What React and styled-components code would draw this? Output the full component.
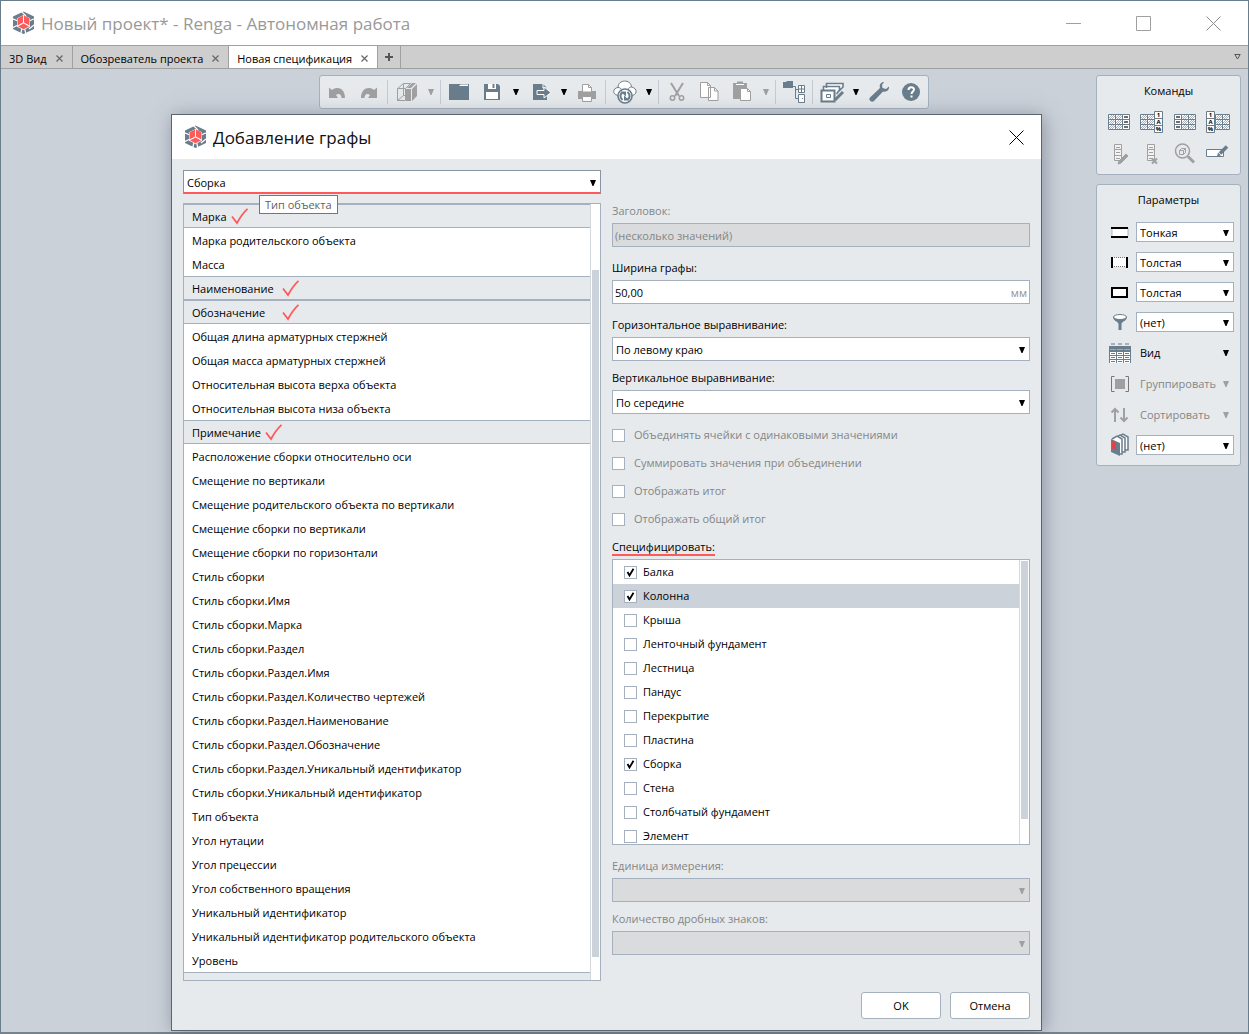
import * as React from 'react';
import { useState } from 'react';
import styled, { createGlobalStyle, css } from 'styled-components';

const SLATE = '#697d8c';
const DIM = '#a0a0a0';
const LINE = '#a5b1be';
const RED = '#ff5a5a';

const GlobalStyle = createGlobalStyle`
  * {
    box-sizing: border-box;
  }
  body {
    margin: 0;
    color: #000;
    font: 11px/16px 'Open Sans', 'Noto Sans', sans-serif;
  }
  button, input, select {
    font: inherit;
    color: inherit;
    border-radius: 0;
  }
  svg {
    display: block;
    flex: none;
  }
`;

const Window = styled.div`
  position: relative;
  min-height: 100vh;
  display: flex;
  flex-direction: column;
  border: 1px solid ${SLATE};
  border-bottom: 2px solid #76828c;
  background: #cbd1d9;
`;

const TitleBar = styled.header`
  display: flex;
  align-items: center;
  height: 44px;
  padding-left: 11px;
  background: #fff;
`;

const Title = styled.h1`
  flex: 1;
  margin: 0 0 0 5px;
  padding-top: 2px;
  font-size: 17px;
  line-height: 24px;
  font-weight: 400;
  color: ${(props) => (props.$dim ? '#999' : '#111')};
`;

const PlainButton = styled.button`
  display: flex;
  align-items: center;
  justify-content: center;
  padding: 0;
  border: 0;
  background: none;
`;

const WindowButton = styled(PlainButton)`
  width: 70px;
  height: 44px;
`;

const TabBar = styled.nav`
  display: flex;
  height: 24px;
  background: #cecece;
  border-top: 1px solid ${DIM};
  border-bottom: 1px solid ${DIM};
`;

const Tab = styled.div`
  display: flex;
  align-items: center;
  gap: 9px;
  padding: 3px 9px 0 8px;
  border-right: 1px solid ${DIM};
  ${(props) =>
    props.$active &&
    css`
      background: #fff;
    `}
`;

const TabLabel = styled(PlainButton)`
  white-space: nowrap;
`;

const AddTab = styled(PlainButton)`
  width: 23px;
  border-right: 1px solid ${DIM};
`;

const TabMenu = styled(PlainButton)`
  width: 22px;
  margin-left: auto;
`;

const Workspace = styled.main`
  display: grid;
  grid-template-columns: 1fr auto 1fr;
  align-items: start;
  padding: 6px 7px 6px 5px;
`;

const Toolbar = styled.div`
  grid-column: 2;
  display: flex;
  align-items: center;
  height: 34px;
  padding: 0 1px;
  border: 1px solid ${LINE};
  border-radius: 3px;
  background: #e6eaed;
`;

const ToolButton = styled(PlainButton)`
  width: ${(props) => (props.$split ? 34 : 32)}px;
  height: 32px;
`;

const MenuButton = styled(PlainButton)`
  width: 14px;
  height: 32px;
`;

const Separator = styled.span`
  width: 1px;
  height: 24px;
  margin: 0 2px;
  background: #c4cbd2;
`;

const Side = styled.aside`
  justify-self: end;
  width: 145px;
  display: flex;
  flex-direction: column;
  gap: 9px;
`;

const Panel = styled.section`
  padding: 5px;
  border: 1px solid ${LINE};
  border-radius: 3px;
  background: #e6eaed;
`;

const PanelTitle = styled.h2`
  margin: 0 0 6px;
  font-size: 11px;
  line-height: 20px;
  font-weight: 400;
  text-align: center;
`;

const Commands = styled.div`
  display: grid;
  grid-template-columns: repeat(4, 33px);
  grid-auto-rows: 31px;
`;

const Params = styled.div`
  padding: 1px 1px 0 2px;
`;

const ParamRow = styled.div`
  display: grid;
  grid-template-columns: 32px 1fr;
  align-items: center;
  justify-items: center;
  height: ${(props) => (props.$tall ? 31 : 30)}px;
`;

const ParamButton = styled(PlainButton)`
  width: 100%;
  justify-content: space-between;
  padding: 0 5px 0 4px;
  color: ${(props) => (props.disabled ? '#858585' : '#000')};
`;

const SelectBox = styled.span`
  display: grid;
  align-items: center;
  width: 100%;
  > * {
    grid-area: 1 / 1;
  }
  > svg {
    justify-self: end;
    margin: 1px 5px 0 0;
    pointer-events: none;
  }
`;

const NativeSelect = styled.select`
  appearance: none;
  width: 100%;
  height: ${(props) => props.$height}px;
  padding: 1px 14px 0 3px;
  border: 1px solid ${LINE};
  background: #fff;
  outline: none;
  &:disabled {
    background: #dadbdd;
    opacity: 1;
  }
  ${(props) =>
    props.$marked &&
    css`
      padding-top: 2px;
      border-color: #8794a2;
      border-bottom: 2px solid ${RED};
    `}
`;

/* the dialog floats over the workspace */
const Dialog = styled.div`
  position: absolute;
  top: 113px;
  left: 170px;
  right: 206px;
  border: 1px solid #5b656d;
  background: #e6eaed;
  box-shadow: 2px 2px 18px rgba(80, 85, 105, 0.5);
`;

const DialogHeader = styled(TitleBar)`
  padding-left: 12px;
`;

const CloseButton = styled(PlainButton)`
  width: 50px;
  height: 44px;
`;

const DialogBody = styled.form`
  display: grid;
  grid-template-columns: 1fr 1fr;
  column-gap: 11px;
  padding: 11px;
`;

const TypeField = styled.div`
  position: relative;
  height: 33px;
`;

const Tooltip = styled.span`
  position: absolute;
  top: 25px;
  left: 76px;
  height: 19px;
  padding: 1px 5px;
  border: 1px solid #767676;
  background: #fff;
  color: #5f5f5f;
  white-space: nowrap;
`;

const ListFrame = styled.div`
  display: flex;
  height: ${(props) => props.$height}px;
  border: 1px solid ${LINE};
  background: #fff;
`;

const List = styled.ul`
  flex: 1;
  margin: 0;
  padding: 0;
  list-style: none;
  overflow: hidden;
`;

const ScrollTrack = styled.div`
  width: 10px;
  padding: 1px;
  border-left: 1px solid #d3d8dd;
`;

const ScrollThumb = styled.div`
  width: 7px;
  height: ${(props) => props.$size}px;
  margin-top: ${(props) => props.$start}px;
  background: #cbd2d9;
`;

const Item = styled.li`
  display: flex;
  align-items: center;
  gap: ${(props) => props.$gap || 4}px;
  height: 24px;
  padding: 1px 0 0 8px;
  border: 0 solid ${LINE};
  ${(props) =>
    props.$used &&
    css`
      border-width: 1px 0;
      background: #e6eaed;
    `}
`;

const CheckItem = styled.li`
  display: flex;
  align-items: center;
  height: 24px;
  padding-left: 11px;
  background: ${(props) => (props.$selected ? '#cbd2d9' : 'none')};
`;

const Properties = styled.div`
  min-width: 0;
`;

const Fields = styled.div`
  min-width: 0;
  margin-top: 33px;
`;

const Field = styled.div`
  display: grid;
  gap: 4px;
  margin-bottom: ${(props) => (props.$tight ? 9 : 13)}px;
  color: ${(props) => (props.$disabled ? '#858585' : '#000')};
`;

const Marked = styled.span`
  display: block;
  width: fit-content;
  height: 17px;
  margin-bottom: 3px;
  border-bottom: 2px solid ${RED};
`;

const TextBox = styled.div`
  display: flex;
  align-items: center;
  height: 24px;
  padding: 1px 2px 0;
  border: 1px solid ${LINE};
  background: ${(props) => (props.$disabled ? '#dadbdd' : '#fff')};
`;

const TextInput = styled.input`
  flex: 1;
  min-width: 0;
  padding: 0;
  border: 0;
  background: none;
  outline: none;
  &:disabled {
    color: #858585;
  }
`;

const Unit = styled.span`
  color: #8f8f8f;
`;

const CheckLabel = styled.label`
  display: flex;
  align-items: center;
  gap: ${(props) => (props.$wide ? 9 : 6)}px;
  height: 16px;
  color: ${(props) => (props.$wide ? '#858585' : '#000')};
`;

const CheckStack = styled.div`
  display: grid;
  gap: 12px;
  margin-bottom: 12px;
`;

const Box = styled.span`
  display: grid;
  place-items: center;
  > * {
    grid-area: 1 / 1;
  }
  input {
    appearance: none;
    width: 13px;
    height: 13px;
    margin: 0;
    border: 1px solid ${LINE};
    background: #fff;
  }
  svg {
    pointer-events: none;
  }
  input:not(:checked) + svg {
    display: none;
  }
`;

const Footer = styled.div`
  grid-column: 1 / -1;
  display: flex;
  justify-content: flex-end;
  gap: 9px;
  margin-top: 11px;
`;

const PushButton = styled.button`
  width: 80px;
  height: 27px;
  padding: 0;
  border: 1px solid ${LINE};
  border-radius: 3px;
  background: #fff;
`;

function Icon({ size = 24, children }) {
  return (
    <svg width={size} height={size} viewBox={`0 0 ${size} ${size}`} fill="none" aria-hidden="true">
      {children}
    </svg>
  );
}

function Arrow({ dim }) {
  return (
    <svg width="6" height="6" viewBox="0 0 6 6" aria-hidden="true">
      <path d="M0 0h6L3.5 6h-1z" fill={dim ? DIM : '#000'} />
    </svg>
  );
}

function Cross({ size, color, width = 1 }) {
  return (
    <svg width={size} height={size} viewBox={`0 0 ${size} ${size}`} aria-hidden="true">
      <path d={`M.5 .5L${size - 0.5} ${size - 0.5}M${size - 0.5} .5L.5 ${size - 0.5}`} stroke={color} strokeWidth={width} />
    </svg>
  );
}

function Logo() {
  return (
    <Icon>
      <path d="M11.500 .5l10.500 5v12.500l-10.500 5-10.500-5V5.500z" fill={SLATE} />
      <path d="M11.500 4l6.500 3.300v8.400l-6.500 3.300L5 15.700V7.300z" fill="#fff" />
      <path d="M0 7.500l6 2.500M23 7.500L17 10M9 0l5 5M5 14.500l-5 2.500M17 18l5-4M8.500 23.500l1.500-6M14 23.500L12.500 17" stroke="#fff" strokeWidth="1.200" />
      <path d="M11 4.500v7L5.500 14.500V7.200zM12 4.500v7l5.500 3V7.200zM11.500 12.500l5.500 3-5.500 2.800L6 15.500z" fill={RED} />
    </Icon>
  );
}

function Tick() {
  return (
    <svg width="17" height="17" viewBox="0 0 17 17" fill="none" aria-hidden="true">
      <path d="M1 8.500l5 6.500C9 9.500 12 5 16.500 .8" stroke={RED} strokeWidth="1.800" />
    </svg>
  );
}

const icons = {
  undo: <path d="M4 7.500l3 2.500c5-4 13-2 13 8h-3.500c0-4-3-5-5.500-3l2 3H4z" fill={DIM} />,
  redo: <path d="M20 7.500L17 10C12 6 4 8 4 18h3.500c0-4 3-5 5.500-3l-2 3h9z" fill={DIM} />,
  cube: (
    <>
      <path d="M2.500 8.500h8v12h-8zM2.500 8.500l6-5h7l-5 5M8.500 3.500v12l-6 5M8.500 15.500h2" stroke={DIM} />
      <path d="M12 8l5-5h4l-5 5zM11 9h5v12h-5zM17 9l5-5v12l-5 5z" fill={DIM} />
    </>
  ),
  folder: (
    <>
      <path d="M2 4h20v16H2z" fill={SLATE} />
      <path d="M13.500 4.500H21V6h-9z" fill="#fff" />
    </>
  ),
  save: (
    <>
      <path d="M4 4h14l2 2v14H4z" fill={SLATE} />
      <path d="M8 4h8v5H8zM6 12h12v7H6z" fill="#fff" />
      <path d="M12.500 4h2v4h-2z" fill={SLATE} />
    </>
  ),
  exportFile: (
    <>
      <path d="M5 4h10l4 4v12H5z" fill={SLATE} />
      <path d="M15 4v4h4" stroke="#fff" />
      <path d="M9 10.500h7V7l7 5.500-7 5.500v-3.500H9z" fill={SLATE} stroke="#fff" />
    </>
  ),
  print: (
    <>
      <path d="M3 11h18v8H3z" fill={DIM} />
      <path d="M7.500 12V4.500h6l3 3V12zM7.500 16.500h9v5h-9z" fill="#fff" stroke={DIM} />
      <path d="M13.500 4.500v3h3" stroke={DIM} />
    </>
  ),
  sync: (
    <>
      <path d="M7 15.500C-1 16-1 8 5 7.500 5-1 18-1 18.500 7c6.500 1 6 9-1 8.500z" fill="#fff" stroke={SLATE} />
      <path d="M5 7.500c2 0 3 1 3 2M18.500 7c-2 0-3 1-3 2.500" stroke={SLATE} />
      <circle cx="12" cy="16" r="7" fill="#fff" stroke={SLATE} strokeWidth="1.600" />
      <path d="M9.500 20c-3.500-3-2-6.500 0-7.500M14.500 12c3.500 3 2 6.500 0 7.500" stroke={SLATE} strokeWidth="2" />
      <path d="M7.500 11.500H13v5zM16.500 20.500H11v-5z" fill={SLATE} />
    </>
  ),
  cut: (
    <>
      <path d="M6 3l8 13M18 3l-8 13" stroke={DIM} strokeWidth="2" />
      <circle cx="7.500" cy="18" r="2.200" stroke={DIM} strokeWidth="1.500" />
      <circle cx="16.500" cy="18" r="2.200" stroke={DIM} strokeWidth="1.500" />
    </>
  ),
  copy: (
    <>
      <path d="M3.500 2.500h7l3 3v12h-10zM11.500 7.500h6l3.500 3.500v9.500h-9.500z" fill="#fff" stroke={DIM} />
      <path d="M10.500 2.500v3h3M17.500 7.500V11h3.500" stroke={DIM} />
    </>
  ),
  paste: (
    <>
      <path d="M3 3h4V1.500h6V3h4v16H3z" fill={DIM} />
      <path d="M6 4.500h8" stroke="#fff" />
      <path d="M10.500 8.500h7l3 3v9h-10z" fill="#fff" stroke={DIM} />
      <path d="M17.500 8.500v3h3" stroke={DIM} />
    </>
  ),
  tree: (
    <>
      <path d="M1 2h3l1-1h6v7H1z" fill={SLATE} />
      <path d="M11 6.500h2.500v12H16M13.500 9.500H16" stroke={SLATE} />
      <path d="M16.500 5.500h6v7h-6zM19.500 5.500v7M16.500 9h6M16.500 14.500h6v8h-6zM20 18.500h1" fill="#fff" stroke={SLATE} />
    </>
  ),
  boxes: (
    <>
      <path d="M6.500 8V3.500H23V7l-6 6M3.500 11V6.500h16V10l-3 4" fill="#fff" stroke={SLATE} strokeWidth="1.600" />
      <path d="M1.500 10.500h13v11h-13z" fill="#fff" stroke={SLATE} strokeWidth="2" />
      <path d="M15 20l8-8" stroke={SLATE} strokeWidth="3" />
      <path d="M6.500 14.500h4v3h-4z" stroke={SLATE} />
    </>
  ),
  wrench: (
    <path d="M17 2c-3 0-5 2.500-4 6L3 17.500c-2 2.500 1.500 5.500 4 3.500L16 11.500c3.500 1 6.500-1.500 6-5L19 9l-3.500-1-.5-3z" fill={SLATE} />
  ),
  help: (
    <>
      <circle cx="12" cy="12" r="9" fill={SLATE} />
      <path d="M9.500 10c0-3.500 5.500-3.500 5.500-.5 0 2-2.500 2-2.500 4.500M12.500 15.500v2" stroke="#fff" strokeWidth="2" />
    </>
  ),
};

function TableGlyph({ x, cols }) {
  const cells = [];
  for (let c = 0; c < cols; c++) {
    for (let r = 0; r < 3; r++) {
      const left = x + c * 7;
      const top = 4 + r * 5;
      cells.push(
        <g key={`${c}-${r}`}>
          <path d={`M${left + 0.5} ${top + 0.5}h7v5h-7z`} stroke={SLATE} fill="#fff" />
          <path d={`M${left + 1} ${top + 4}l3-3M${left + 2} ${top + 5}l4-4M${left + 4} ${top + 5}l3-3`} stroke={LINE} />
        </g>
      );
    }
  }
  return cells;
}

function DashColumn({ x }) {
  return (
    <>
      <path d={`M${x + 0.5} 4.500h7v15h-7zM${x} 9.500h8M${x} 14.500h8`} fill="#fff" stroke={SLATE} />
      <path d={`M${x + 2} 7h4M${x + 2} 12h4M${x + 2} 17h4`} stroke="#6e6e6e" strokeWidth="2" />
    </>
  );
}

function FormatColumn({ x }) {
  return (
    <>
      <path d={`M${x + 0.5} 1.500h8v21h-8zM${x} 8.500h9M${x} 15.500h9`} fill="#fff" stroke={SLATE} />
      <g fill="#000" fontSize="6" fontWeight="700" textAnchor="middle">
        <text x={x + 4.5} y="7">1</text>
        <text x={x + 4.5} y="14">A</text>
        <text x={x + 4.5} y="21">%</text>
      </g>
    </>
  );
}

const recordGlyph = (
  <path d="M8.500 3.500h7v16h-7zM8 8.500h8M8 14.500h8M10 6.500h4M10 11.500h4M10 17.500h4" fill="#f2f2f2" stroke={DIM} />
);

const commands = [
  { label: 'Добавить графу справа', icon: <><TableGlyph x={2} cols={2} /><DashColumn x={16} /></> },
  { label: 'Добавить формулу справа', icon: <><TableGlyph x={1} cols={2} /><FormatColumn x={15} /></> },
  { label: 'Добавить графу слева', icon: <><TableGlyph x={9} cols={2} /><DashColumn x={2} /></> },
  { label: 'Добавить формулу слева', icon: <><TableGlyph x={10} cols={2} /><FormatColumn x={1} /></> },
  {
    label: 'Изменить графу',
    disabled: true,
    icon: <>{recordGlyph}<path d="M13 20l7-7 2 2-7 7-3 1z" fill={DIM} stroke={DIM} /></>,
  },
  {
    label: 'Удалить графу',
    disabled: true,
    icon: <>{recordGlyph}<path d="M13 17.500l5 5M18 17.500l-5 5" stroke={DIM} strokeWidth="2" /></>,
  },
  {
    label: 'Найти объект',
    disabled: true,
    icon: (
      <>
        <circle cx="10.500" cy="10" r="7" stroke={DIM} strokeWidth="1.500" />
        <path d="M7.500 9.500h4v4h-4zM7.500 9.500l2-2h4v4l-2 2M11.500 9.500l2-2" stroke={DIM} />
        <path d="M16 15.500l6 6" stroke={DIM} strokeWidth="3" />
      </>
    ),
  },
  {
    label: 'Переименовать',
    icon: (
      <>
        <path d="M1.500 8.500h17v7h-17z" fill="#fff" stroke={SLATE} />
        <path d="M15 12.500L22 5.500" stroke={SLATE} strokeWidth="3.500" />
        <path d="M12 15.500l1-4 3 3z" fill={SLATE} />
      </>
    ),
  },
];

const params = [
  {
    label: 'Горизонтальные линии',
    value: 'Тонкая',
    icon: <><path d="M4 7.500v9h16v-9" fill="#fff" stroke="#777" strokeDasharray="1 1" /><path d="M3 8h17M3 17h17" stroke="#000" strokeWidth="2" /></>,
  },
  {
    label: 'Вертикальные линии',
    value: 'Толстая',
    icon: <><path d="M4 7.500h15v9H4z" fill="#fff" stroke="#777" strokeDasharray="1 1" /><path d="M4 7v11M19 7v11" stroke="#000" strokeWidth="2" /></>,
  },
  { label: 'Рамка', value: 'Толстая', icon: <path d="M4 8h15v9H4z" fill="#fff" stroke="#000" strokeWidth="2" /> },
  {
    label: 'Фильтр',
    value: '(нет)',
    icon: <><path d="M5 7c0 4 5 4 5.500 7v6h3v-6C14 11 19 11 19 7z" fill={SLATE} /><ellipse cx="12" cy="7" rx="6.500" ry="2.500" fill="#fff" stroke={SLATE} /></>,
  },
  {
    label: 'Вид',
    menu: true,
    icon: (
      <>
        <path d="M3 3h4M10 3h4M17 3h4" stroke={LINE} strokeWidth="2" />
        <path d="M1 5h22v17H1z" fill={SLATE} />
        <path d="M2 8.500h6M9 8.500h6M16 8.500h6" stroke="#9caab5" />
        <path d="M2 12.500h6M9 12.500h6M16 12.500h6M2 16.500h6M9 16.500h6M16 16.500h6M2 20.500h6M9 20.500h6M16 20.500h6" stroke="#fff" strokeWidth="3" />
        <path d="M3 12.500h4M10 12.500h4M17 12.500h4M3 16.500h4M10 16.500h4M17 16.500h4M3 20.500h4M10 20.500h4M17 20.500h4" stroke={SLATE} />
      </>
    ),
  },
  {
    label: 'Группировать',
    menu: true,
    disabled: true,
    icon: <><path d="M6.500 4.500h-3v15h3M17.500 4.500h3v15h-3" stroke="#777" /><path d="M7 7h10v10H7z" fill={DIM} /></>,
  },
  {
    label: 'Сортировать',
    menu: true,
    disabled: true,
    icon: <path d="M7 19V6M3.500 9.500L7 6l3.500 3.500M16 5v13M12.500 14.500L16 18l3.500-3.500" stroke={DIM} strokeWidth="2" />,
  },
  {
    label: 'Раздел',
    value: '(нет)',
    icon: (
      <>
        <path d="M10 4l5-3 5 3v13h-3" fill="#fff" stroke={SLATE} strokeWidth="1.500" />
        <path d="M7 5l5-3 5 3v14h-3" fill="#fff" stroke={SLATE} strokeWidth="1.500" />
        <path d="M4 6l5-3 5 3v15h-3" fill="#fff" stroke={SLATE} strokeWidth="1.500" />
        <path d="M3 6l9 4v13l-9-4z" fill={SLATE} />
        <path d="M4 7.500L8 9v8l-4-1.500z" fill="#e04444" />
      </>
    ),
  },
];

const tabs = ['3D Вид', 'Обозреватель проекта', 'Новая спецификация'];

// used: the column is already in the specification, gap: space before its mark
const properties = [
  { name: 'Марка', used: true },
  { name: 'Марка родительского объекта' },
  { name: 'Масса' },
  { name: 'Наименование', used: true, gap: 8 },
  { name: 'Обозначение', used: true, gap: 17 },
  { name: 'Общая длина арматурных стержней' },
  { name: 'Общая масса арматурных стержней' },
  { name: 'Относительная высота верха объекта' },
  { name: 'Относительная высота низа объекта' },
  { name: 'Примечание', used: true },
  { name: 'Расположение сборки относительно оси' },
  { name: 'Смещение по вертикали' },
  { name: 'Смещение родительского объекта по вертикали' },
  { name: 'Смещение сборки по вертикали' },
  { name: 'Смещение сборки по горизонтали' },
  { name: 'Стиль сборки' },
  { name: 'Стиль сборки.Имя' },
  { name: 'Стиль сборки.Марка' },
  { name: 'Стиль сборки.Раздел' },
  { name: 'Стиль сборки.Раздел.Имя' },
  { name: 'Стиль сборки.Раздел.Количество чертежей' },
  { name: 'Стиль сборки.Раздел.Наименование' },
  { name: 'Стиль сборки.Раздел.Обозначение' },
  { name: 'Стиль сборки.Раздел.Уникальный идентификатор' },
  { name: 'Стиль сборки.Уникальный идентификатор' },
  { name: 'Тип объекта' },
  { name: 'Угол нутации' },
  { name: 'Угол прецессии' },
  { name: 'Угол собственного вращения' },
  { name: 'Уникальный идентификатор' },
  { name: 'Уникальный идентификатор родительского объекта' },
  { name: 'Уровень' },
];

const objects = [
  'Балка', 'Колонна', 'Крыша', 'Ленточный фундамент', 'Лестница', 'Пандус',
  'Перекрытие', 'Пластина', 'Сборка', 'Стена', 'Столбчатый фундамент', 'Элемент',
];

const options = [
  'Объединять ячейки с одинаковыми значениями',
  'Суммировать значения при объединении',
  'Отображать итог',
  'Отображать общий итог',
];

function Tool({ icon, label, menu, disabled }) {
  return (
    <>
      <ToolButton aria-label={label} $split={menu} disabled={disabled}>
        <Icon>{icons[icon]}</Icon>
      </ToolButton>
      {menu && (
        <MenuButton aria-label={label + ': меню'} disabled={disabled}>
          <Arrow dim={disabled} />
        </MenuButton>
      )}
    </>
  );
}

function Select({ value, height = 24, disabled, marked, ...rest }) {
  return (
    <SelectBox>
      <NativeSelect $height={height} $marked={marked} disabled={disabled} {...rest}>
        <option>{value}</option>
      </NativeSelect>
      <Arrow dim={disabled} />
    </SelectBox>
  );
}

function Check({ label, wide, ...rest }) {
  return (
    <CheckLabel $wide={wide}>
      <Box>
        <input type="checkbox" {...rest} />
        <svg width="9" height="9" viewBox="0 0 9 9" fill="none" aria-hidden="true">
          <path d="M1.500 4l2 3.500L7.500 .8" stroke="#000" strokeWidth="1.800" />
        </svg>
      </Box>
      {label}
    </CheckLabel>
  );
}

function AddColumnDialog() {
  const [checked, setChecked] = useState(['Балка', 'Колонна', 'Сборка']);
  const [width, setWidth] = useState('50,00');

  function toggle(name) {
    setChecked(checked.includes(name) ? checked.filter((n) => n !== name) : [...checked, name]);
  }

  return (
    <Dialog role="dialog" aria-labelledby="dialog-title">
      <DialogHeader>
        <Logo />
        <Title as="h2" id="dialog-title">Добавление графы</Title>
        <CloseButton aria-label="Закрыть">
          <Cross size={15} color="#000" />
        </CloseButton>
      </DialogHeader>
      <DialogBody onSubmit={(e) => e.preventDefault()}>
        <Properties>
          <TypeField>
            <Select aria-label="Тип объекта" value="Сборка" marked />
            <Tooltip>Тип объекта</Tooltip>
          </TypeField>
          <ListFrame $height={778}>
            <List>
              {properties.map((p) => (
                <Item key={p.name} $used={p.used} $gap={p.gap}>
                  {p.name}
                  {p.used && <Tick />}
                </Item>
              ))}
              <Item $used />
            </List>
            <ScrollTrack>
              <ScrollThumb $start={65} $size={687} />
            </ScrollTrack>
          </ListFrame>
        </Properties>
        <Fields>
          <Field $disabled>
            <label htmlFor="caption">Заголовок:</label>
            <TextBox $disabled>
              <TextInput id="caption" defaultValue="(несколько значений)" disabled />
            </TextBox>
          </Field>
          <Field>
            <label htmlFor="width">Ширина графы:</label>
            <TextBox>
              <TextInput id="width" value={width} onChange={(e) => setWidth(e.target.value)} />
              <Unit>мм</Unit>
            </TextBox>
          </Field>
          <Field $tight>
            <label htmlFor="halign">Горизонтальное выравнивание:</label>
            <Select id="halign" value="По левому краю" />
          </Field>
          <Field>
            <label htmlFor="valign">Вертикальное выравнивание:</label>
            <Select id="valign" value="По середине" />
          </Field>
          <CheckStack>
            {options.map((o) => (
              <Check key={o} label={o} wide disabled />
            ))}
          </CheckStack>
          <Field>
            <div>
              <Marked>Специфицировать:</Marked>
              <ListFrame $height={286}>
                <List>
                  {objects.map((name) => (
                    <CheckItem key={name} $selected={name === 'Колонна'}>
                      <Check label={name} checked={checked.includes(name)} onChange={() => toggle(name)} />
                    </CheckItem>
                  ))}
                </List>
                <ScrollTrack>
                  <ScrollThumb $start={0} $size={258} />
                </ScrollTrack>
              </ListFrame>
            </div>
          </Field>
          <Field $tight $disabled>
            <label htmlFor="unit">Единица измерения:</label>
            <Select id="unit" value="" disabled />
          </Field>
          <Field $disabled>
            <label htmlFor="digits">Количество дробных знаков:</label>
            <Select id="digits" value="" disabled />
          </Field>
        </Fields>
        <Footer>
          <PushButton type="submit">OK</PushButton>
          <PushButton type="button">Отмена</PushButton>
        </Footer>
      </DialogBody>
    </Dialog>
  );
}

export default function App() {
  const [tab, setTab] = useState(2);

  return (
    <>
      <GlobalStyle />
      <Window>
        <TitleBar>
          <Logo />
          <Title $dim>Новый проект* - Renga - Автономная работа</Title>
          <WindowButton aria-label="Свернуть">
            <svg width="15" height="1"><path d="M0 .5h15" stroke={DIM} /></svg>
          </WindowButton>
          <WindowButton aria-label="Развернуть">
            <svg width="15" height="15" fill="none"><path d="M.5 .5h14v14H.5z" stroke={DIM} /></svg>
          </WindowButton>
          <WindowButton aria-label="Закрыть">
            <Cross size={15} color="#8c8c8c" />
          </WindowButton>
        </TitleBar>
        <TabBar>
          {tabs.map((name, i) => (
            <Tab key={name} $active={i === tab}>
              <TabLabel onClick={() => setTab(i)}>{name}</TabLabel>
              <PlainButton aria-label="Закрыть вкладку">
                <Cross size={7} color="#666" width={1.2} />
              </PlainButton>
            </Tab>
          ))}
          <AddTab aria-label="Новая вкладка">
            <svg width="8" height="8"><path d="M4 0v8M0 4h8" stroke="#555" strokeWidth="2" /></svg>
          </AddTab>
          <TabMenu aria-label="Список вкладок">
            <svg width="7" height="6" fill="none"><path d="M.8 .5h5.400L3.500 5z" stroke="#555" /></svg>
          </TabMenu>
        </TabBar>
        <Workspace>
          <Toolbar role="toolbar">
            <Tool icon="undo" label="Отменить" disabled />
            <Tool icon="redo" label="Повторить" disabled />
            <Separator />
            <Tool icon="cube" label="Вид модели" menu disabled />
            <Separator />
            <Tool icon="folder" label="Открыть" />
            <Tool icon="save" label="Сохранить" menu />
            <Tool icon="exportFile" label="Экспорт" menu />
            <Tool icon="print" label="Печать" disabled />
            <Separator />
            <Tool icon="sync" label="Совместная работа" menu />
            <Separator />
            <Tool icon="cut" label="Вырезать" disabled />
            <Tool icon="copy" label="Копировать" disabled />
            <Tool icon="paste" label="Вставить" menu disabled />
            <Separator />
            <Tool icon="tree" label="Обозреватель проекта" />
            <Separator />
            <Tool icon="boxes" label="Управление стилями" menu />
            <Tool icon="wrench" label="Настройки" />
            <Tool icon="help" label="Справка" />
          </Toolbar>
          <Side>
            <Panel>
              <PanelTitle>Команды</PanelTitle>
              <Commands>
                {commands.map((c) => (
                  <PlainButton key={c.label} aria-label={c.label} disabled={c.disabled}>
                    <Icon size={25}>{c.icon}</Icon>
                  </PlainButton>
                ))}
              </Commands>
            </Panel>
            <Panel>
              <PanelTitle>Параметры</PanelTitle>
              <Params>
                {params.map((p) => (
                  <ParamRow key={p.label} $tall={p.menu}>
                    <Icon>{p.icon}</Icon>
                    {p.menu ? (
                      <ParamButton disabled={p.disabled}>
                        {p.label}
                        <Arrow dim={p.disabled} />
                      </ParamButton>
                    ) : (
                      <Select aria-label={p.label} value={p.value} height={20} />
                    )}
                  </ParamRow>
                ))}
              </Params>
            </Panel>
          </Side>
        </Workspace>
        <AddColumnDialog />
      </Window>
    </>
  );
}
